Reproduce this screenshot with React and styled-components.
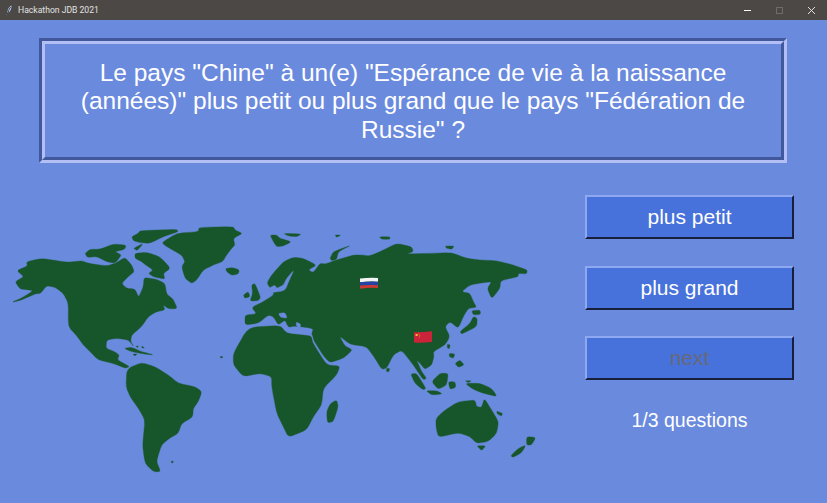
import styled, { createGlobalStyle } from "styled-components";

const GlobalStyle = createGlobalStyle`
    html, body {
        margin: 0;
        padding: 0;
        height: 100%;
        background: #6a8ade;
        overflow: hidden;
    }
`
const Fenetre = styled.div`
    width: 827px;
    height: 503px;
    display: flex;
    flex-direction: column;
    background: #6a8ade;
    font-family: "Liberation Sans", Arial, sans-serif;
    color: #fff;
`
const BarreTitre = styled.header`
    height: 20px;
    flex: none;
    display: flex;
    align-items: center;
    background: #4b4846;
    padding-left: 6px;
`
const IconeApp = styled.svg`
    width: 6px;
    height: 11px;
    margin-right: 6px;
`
const TitreApp = styled.span`
    flex: 1;
    font-family: Roboto, "Noto Sans", sans-serif;
    font-size: 8.6px;
    color: #e4e2e0;
`
const BoutonFenetre = styled.div`
    width: 32px;
    height: 20px;
    display: flex;
    align-items: center;
    justify-content: center;
    svg {
        width: 9px;
        height: 9px;
        stroke: ${(p) => p.$couleur};
        fill: none;
    }
`
const CadreQuestion = styled.section`
    margin: 18px 40px 0 39px;
    height: 125px;
    box-sizing: border-box;
    border: 3.5px solid;
    border-color: #41599c #b3bff4 #b3bff4 #41599c;
`
const Question = styled.h1`
    margin: 0;
    height: 100%;
    box-sizing: border-box;
    border: 3.5px solid;
    border-color: #b3bff4 #41599c #41599c #b3bff4;
    padding: 2px 24px 0;
    display: flex;
    align-items: center;
    justify-content: center;
    text-align: center;
    font-size: 24.5px;
    font-weight: 400;
    line-height: 28.5px;
`
const Contenu = styled.main`
    margin-top: 32px;
    display: flex;
    align-items: flex-start;
`
const Carte = styled.svg`
    width: 570px;
    height: 308px;
    flex: none;
`
const ColonneReponses = styled.aside`
    margin-left: 15px;
    width: 209px;
    display: flex;
    flex-direction: column;
    gap: 26.5px;
`
const BoutonReponse = styled.button`
    width: 209px;
    height: 44px;
    box-sizing: border-box;
    padding: 0;
    border: 2px solid;
    border-color: #8ea8f2 #171f3d #171f3d #8ea8f2;
    background: #4771db;
    color: ${(p) => (p.disabled ? "#666a78" : "#fff")};
    font-family: inherit;
    font-size: 21px;
`
const Compteur = styled.p`
    margin: 0;
    padding-top: 2px;
    text-align: center;
    font-size: 19.5px;
    line-height: 23px;
`

// contours releves sur la capture, coins arrondis
const lisser = (texte) => {
    const n = texte.trim().split(/[\s,]+/).map(Number);
    const pts = [];
    for (let i = 0; i < n.length; i += 2) pts.push([n[i], n[i + 1]]);
    const vers = (a, b, t) => [a[0] + (b[0] - a[0]) * t, a[1] + (b[1] - a[1]) * t];
    const total = pts.length;
    let d = "";
    pts.forEach((p, i) => {
        const avant = vers(p, pts[(i + total - 1) % total], 0.28);
        const apres = vers(p, pts[(i + 1) % total], 0.28);
        d += `${i ? "L" : "M"}${avant.join(" ")}Q${p.join(" ")} ${apres.join(" ")}`;
    });
    return d + "Z";
};

const AMERIQUES = [
    "35,247 65,234 100,212 80,209 60,207 45,185 72,170 50,152 82,138 80,125 125,115 170,122 205,127 245,122 265,130 320,138 345,130 375,112 395,135 403,155 385,170 365,190 380,205 405,207 416,232 430,200 432,172 470,178 495,190 500,222 520,238 532,266 505,266 490,255 495,270 470,275 445,290 425,320 395,345 392,365 402,380 385,360 350,355 320,360 318,385 342,394 358,405 352,420 390,440 375,445 345,432 295,420 270,395 250,375 232,350 205,320 205,250 190,220 165,202 140,197 122,220 105,222 65,240",
    "255,100 270,88 300,88 340,72 378,75 375,88 345,95 365,105 345,130 320,125 290,110 262,112",
    "405,100 440,97 480,110 512,145 490,160 495,178 460,170 445,160 460,150 430,130 425,125 405,115",
    "395,50 415,40 420,32 530,28 535,35 490,50 450,70 420,68 400,62",
    "400,85 430,70 412,92",
    "485,68 530,40 595,35 597,22 700,20 705,30 728,40 700,55 705,75 695,85 680,105 668,125 640,135 610,150 590,180 575,190 555,175 545,140 555,125 545,105 500,80",
    "677,145 700,143 718,150 715,162 695,166 680,155",
    "755,195 765,190 782,232 775,242 750,243 758,220",
    "730,225 745,215 750,230 735,235",
    "372,385 395,382 425,395 462,405 430,402 395,395",
    "398,402 412,402 405,408",
];

const ANTILLES = ["408,378 416,378 412,383", "425,378 434,384 426,384", "660,410 668,410 664,414"];

const SUD = [
    "0,112 35,98 75,110 115,135 145,160 195,170 216,185 205,215 190,235 188,262 155,280 145,310 118,325 95,345 85,375 80,395 92,425 70,425 45,400 38,350 40,320 45,270 25,235 0,200 -12,170 -10,125",
    "270,80 279,80 275,85",
    "122,394 131,394 127,400",
];

const ASIE = [
    "-75,315 -75,285 -40,282 -55,262 -20,245 15,222 -10,190 5,165 40,125 70,112 100,115 140,135 115,150 130,158 150,130 165,132 200,120 250,105 275,105 300,108 340,90 380,70 425,80 430,95 410,102 480,100 545,98 590,115 630,120 680,122 730,135 772,150 770,162 745,160 745,170 692,182 690,205 665,237 652,205 665,185 640,188 600,195 575,215 600,220 610,245 620,262 595,265 580,290 565,325 540,305 525,320 540,350 525,375 490,395 492,410 485,435 465,448 450,430 440,420 455,455 470,475 460,480 430,435 395,390 370,405 350,445 335,448 315,415 290,380 240,373 208,348 225,378 248,390 220,415 180,428 162,410 132,363 128,347 125,342 130,325 75,318 55,322 45,300 25,315 10,290 -5,285 -35,310",
    "0,45 20,45 30,55 65,65 40,78 20,80 10,65",
    "40,40 95,42 80,50 55,48",
    "180,115 190,95 245,75 205,95 200,118 185,122",
    "195,45 213,45 200,52",
    "328,50 360,50 360,58 335,58",
    "525,78 553,78 545,88 530,85",
    "570,335 600,310 610,290 622,295 620,320 590,335 575,342",
    "605,272 630,270 632,283 610,285",
];

const AFRIQUE = [
    "128,368 170,435 210,438 200,465 160,505 155,555 130,590 110,630 55,652 40,620 20,580 5,500 5,470 -30,460 -80,470 -110,435 -110,400 -65,322 30,316 50,340 100,345 124,348",
];

const MERS = [
    "-5,205 5,218 45,212 58,180 72,150 50,175 40,195 20,205 15,195",
    "25,280 45,278 52,295 32,292",
    "78,306 92,312 90,326 80,320",
];

const ILES = [
    "620,210 625,230 610,275 592,278 590,245 600,222",
    "770,114 780,116 776,126 769,124",
    "842,132 860,130 888,175 880,180 855,160",
    "905,155 930,130 955,130 950,165 925,178",
    "888,182 920,182 938,192 905,195",
    "955,155 975,155 978,172 960,178",
    "975,100 990,90 1003,105 985,112",
    "958,70 975,72 970,85 958,80",
    "952,42 961,45 958,56 952,54",
    "1005,160 1050,160 1085,175 1102,200 1060,190 1030,178",
    "1005,152 1025,152 1015,158",
    "918,265 945,240 985,215 1035,210 1040,230 1055,232 1063,205 1085,240 1106,275 1100,310 1075,335 1040,340 1020,320 985,308 925,322 918,290",
    "1040,347 1068,347 1055,362",
    "1190,320 1218,322 1205,345 1190,345",
    "1142,378 1165,355 1188,345 1175,368 1150,382",
    "1100,243 1118,250 1115,258 1102,252",
];

const Contours = ({ liste, couleur = "#19572b" }) =>
    liste.map((c) => <path key={c} d={lisser(c)} fill={couleur} stroke={couleur} strokeWidth="1" />);

function MapMonde() {
    return (
        <Carte viewBox="0 195 570 308">
            <defs>
                <filter id="flou" x="-5%" y="-5%" width="110%" height="110%">
                    <feGaussianBlur stdDeviation="0.45" />
                </filter>
            </defs>
            <g filter="url(#flou)">
                <g transform="translate(0 220) scale(.3333)">
                    <Contours liste={AMERIQUES} />
                    <Contours liste={ANTILLES} />
                </g>
                <g transform="translate(130 330) scale(.3333)">
                    <Contours liste={SUD} />
                    <Contours liste={ILES} />
                </g>
                <g transform="translate(270 220) scale(.3333)">
                    <Contours liste={ASIE} />
                    <Contours liste={AFRIQUE} />
                    <Contours liste={MERS} couleur="#6a8ade" />
                </g>
            </g>
            {/* drapeau russe */}
            <path d="M360 278.5q9 -1 18 -.5v3.8q-9 -.5 -18 .4z" fill="#f4f4f4" />
            <path d="M360 282.2q9 -.9 18 -.4v3.4q-9 -.5 -18 .4z" fill="#2743a8" />
            <path d="M360 285.6q9 -.9 18 -.4v2.8q-9 -.5 -18 .7z" fill="#cf3a35" />
            {/* drapeau chinois */}
            <path d="M414 332.3q9 .2 18 -1v10.6q-9 1.2 -18 .6z" fill="#c9243a" />
            <rect x="415.6" y="334" width="2" height="2" fill="#f2c230" />
            <path d="M418.5 333.5q2.5 1.5 .8 4" fill="none" stroke="#e8893a" strokeWidth=".6" />
        </Carte>
    );
}

export default function App() {
    return (
        <Fenetre>
            <GlobalStyle />
            <BarreTitre>
                <IconeApp viewBox="0 0 6 11">
                    <path d="M5.6 .4C3.2 1.4 1.6 4 1.4 7.4L.4 10.6l1.6-2.8c2.2-.8 3.4-3.6 3.6-7.4z" fill="#b9d0e6" />
                    <path d="M4.6 2C3.4 3.4 2.6 5.4 2.2 7.4L1.2 9" stroke="#16243e" strokeWidth=".8" fill="none" />
                </IconeApp>
                <TitreApp>Hackathon JDB 2021</TitreApp>
                <BoutonFenetre $couleur="#ffffff">
                    <svg viewBox="0 0 9 9"><path d="M1 4.5h7" /></svg>
                </BoutonFenetre>
                <BoutonFenetre $couleur="#6f6d6b">
                    <svg viewBox="0 0 9 9"><rect x="1.5" y="1.5" width="6" height="6" /></svg>
                </BoutonFenetre>
                <BoutonFenetre $couleur="#e4e2e0">
                    <svg viewBox="0 0 9 9"><path d="M1 1l7 7M8 1l-7 7" /></svg>
                </BoutonFenetre>
            </BarreTitre>
            <CadreQuestion>
                <Question>
                    Le pays "Chine" à un(e) "Espérance de vie à la naissance (années)" plus petit ou plus grand que le pays "Fédération de Russie" ?
                </Question>
            </CadreQuestion>
            <Contenu>
                <MapMonde />
                <ColonneReponses>
                    <BoutonReponse>plus petit</BoutonReponse>
                    <BoutonReponse>plus grand</BoutonReponse>
                    <BoutonReponse disabled>next</BoutonReponse>
                    <Compteur>1/3 questions</Compteur>
                </ColonneReponses>
            </Contenu>
        </Fenetre>
    );
}
